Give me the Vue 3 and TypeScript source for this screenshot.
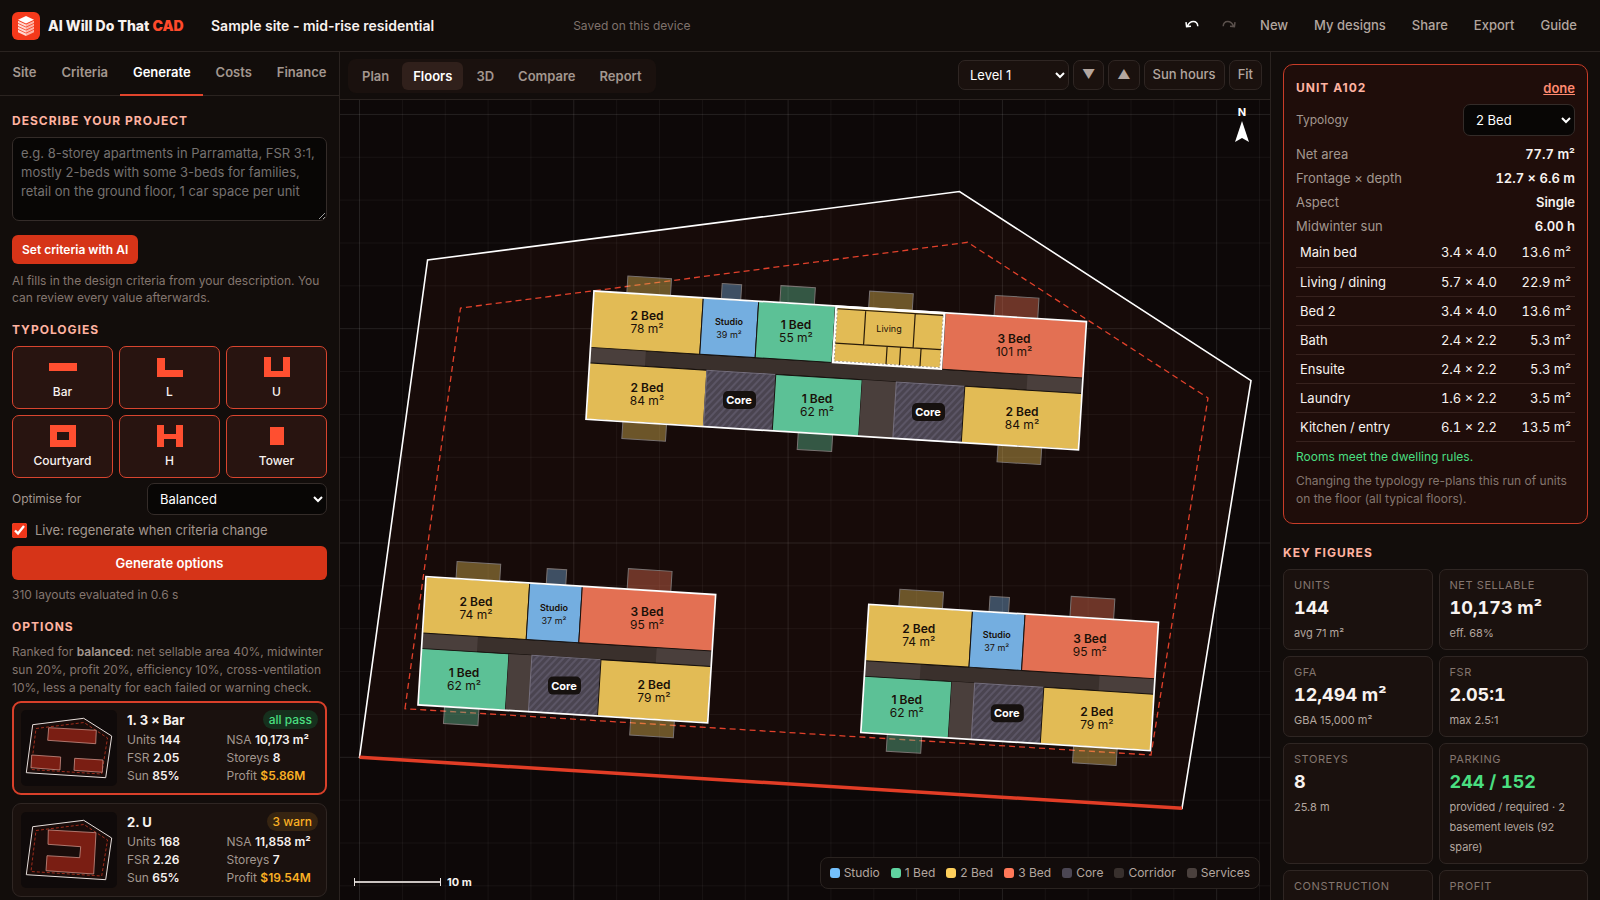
<script setup lang="ts">
import { ref } from 'vue'

type Kind = 'studio' | 'bed1' | 'bed2' | 'bed3' | 'core' | 'corridor' | 'services'

interface Space { kind: Kind; x: number; y: number; w: number; h: number }
interface Label { x: number; y: number; name: string; area: string; small?: boolean }
interface Block { x: number; y: number; width: number; spaces: Space[]; balconies: Space[]; labels: Label[]; cores: { x: number; y: number }[] }
interface Figure { label: string; value?: string; note?: string; good?: boolean }

const tabs = ['Site', 'Criteria', 'Generate', 'Costs', 'Finance']
const activeTab = ref('Generate')
const views = ['Plan', 'Floors', '3D', 'Compare', 'Report']
const activeView = ref('Floors')
const menu = ['New', 'My designs', 'Share', 'Export', 'Guide']
const live = ref(true)
const brief = ref('')

const typologies = [
  { name: 'Bar', d: 'M3 8h28v8H3z' },
  { name: 'L', d: 'M4 3h8v12h18v7H4z' },
  { name: 'U', d: 'M4 2h7v14h12V2h7v20H4z' },
  { name: 'Courtyard', d: 'M4 1h26v22H4zM11 8v8h12V8z' },
  { name: 'H', d: 'M4 1h7v9h12V1h7v22h-7v-8H11v8H4z' },
  { name: 'Tower', d: 'M10 3h14v18H10z' },
]

const options = [
  {
    title: '1. 3 × Bar', badge: 'all pass', tone: 'pass', selected: true,
    stats: [['Units', '144'], ['NSA', '10,173 m²'], ['FSR', '2.05'], ['Storeys', '8'], ['Sun', '85%'], ['Profit', '$5.86M']],
    shapes: ['27.7,17.7 75.3,20.3 74.7,33.7 26.7,30.3', '10.7,45 39.7,47 39,60 10,57.7', '53.7,48.3 82,50 81.3,62.3 53,60.3'],
  },
  {
    title: '2. U', badge: '3 warn', tone: 'warn', selected: false,
    stats: [['Units', '168'], ['NSA', '11,858 m²'], ['FSR', '2.26'], ['Storeys', '7'], ['Sun', '65%'], ['Profit', '$19.54M']],
    shapes: ['27.3,18 75,20.7 72.7,62 25,58.7 26,43.7 58.7,45.7 59.7,34.7 27,32.3'],
  },
]

const facts = [
  ['Net area', '77.7 m²'],
  ['Frontage × depth', '12.7 × 6.6 m'],
  ['Aspect', 'Single'],
  ['Midwinter sun', '6.00 h'],
]
const rooms = [
  ['Main bed', '3.4 × 4.0', '13.6 m²'],
  ['Living / dining', '5.7 × 4.0', '22.9 m²'],
  ['Bed 2', '3.4 × 4.0', '13.6 m²'],
  ['Bath', '2.4 × 2.2', '5.3 m²'],
  ['Ensuite', '2.4 × 2.2', '5.3 m²'],
  ['Laundry', '1.6 × 2.2', '3.5 m²'],
  ['Kitchen / entry', '6.1 × 2.2', '13.5 m²'],
]
const figures: Figure[] = [
  { label: 'Units', value: '144', note: 'avg 71 m²' },
  { label: 'Net sellable', value: '10,173 m²', note: 'eff. 68%' },
  { label: 'GFA', value: '12,494 m²', note: 'GBA 15,000 m²' },
  { label: 'FSR', value: '2.05:1', note: 'max 2.5:1' },
  { label: 'Storeys', value: '8', note: '25.8 m' },
  { label: 'Parking', value: '244 / 152', note: 'provided / required · 2 basement levels (92 spare)', good: true },
  { label: 'Construction' },
  { label: 'Profit' },
]
const legend: { kind: Kind; name: string }[] = [
  { kind: 'studio', name: 'Studio' },
  { kind: 'bed1', name: '1 Bed' },
  { kind: 'bed2', name: '2 Bed' },
  { kind: 'bed3', name: '3 Bed' },
  { kind: 'core', name: 'Core' },
  { kind: 'corridor', name: 'Corridor' },
  { kind: 'services', name: 'Services' },
]

const NORTH = 56.5
const SOUTH = 72
const DEPTH = 128.5

function row(y: number, cuts: number[], kinds: Kind[]): Space[] {
  return kinds.map((kind, i) => ({ kind, x: cuts[i], y, w: cuts[i + 1] - cuts[i], h: 56.5 }))
}
function corridor(width: number): Space[] {
  return [
    { kind: 'corridor', x: 0, y: NORTH, w: width, h: SOUTH - NORTH },
    { kind: 'services', x: 0, y: NORTH, w: 55.5, h: SOUTH - NORTH },
    { kind: 'services', x: width - 55.5, y: NORTH, w: 55.5, h: SOUTH - NORTH },
  ]
}
function balconies(spaces: Space[]): Space[] {
  const sizes: Partial<Record<Kind, [number, number]>> = { studio: [19.5, 15.5], bed1: [34.5, 17], bed2: [43.7, 17], bed3: [43.7, 20.5] }
  return spaces.flatMap((s) => {
    const size = sizes[s.kind]
    if (!size) return []
    return [{ kind: s.kind, x: s.x + (s.w - size[0]) / 2, y: s.y === 0 ? -size[1] : DEPTH, w: size[0], h: size[1] }]
  })
}

const mainUnits = [
  ...row(0, [0, 109.5, 165, 242, 352, 493.4], ['bed2', 'studio', 'bed1', 'bed2', 'bed3']),
  ...row(SOUTH, [0, 117.6, 186.6, 273.2, 307.4, 376, 493.4], ['bed2', 'core', 'bed1', 'services', 'core', 'bed2']),
]
const wingUnits = [
  ...row(0, [0, 103.9, 156.6, 290.2], ['bed2', 'studio', 'bed3']),
  ...row(SOUTH, [0, 87.6, 110.6, 179.8, 290.2], ['bed1', 'services', 'core', 'bed2']),
]
function wing(x: number, y: number): Block {
  return {
    x, y, width: 290.2,
    spaces: [...corridor(290.2), ...wingUnits],
    balconies: balconies(wingUnits),
    labels: [
      { x: x + 50, y: y + 31, name: '2 Bed', area: '74 m²' },
      { x: x + 128, y: y + 36, name: 'Studio', area: '37 m²', small: true },
      { x: x + 221, y: y + 41, name: '3 Bed', area: '95 m²' },
      { x: x + 38, y: y + 102, name: '1 Bed', area: '62 m²' },
      { x: x + 228, y: y + 114, name: '2 Bed', area: '79 m²' },
    ],
    cores: [{ x: x + 138, y: y + 109 }],
  }
}
const blocks: Block[] = [
  {
    x: 594, y: 291, width: 493.4,
    spaces: [...corridor(493.4), ...mainUnits],
    balconies: balconies(mainUnits),
    labels: [
      { x: 647, y: 322, name: '2 Bed', area: '78 m²' },
      { x: 729, y: 327, name: 'Studio', area: '39 m²', small: true },
      { x: 796, y: 331, name: '1 Bed', area: '55 m²' },
      { x: 1014, y: 345, name: '3 Bed', area: '101 m²' },
      { x: 647, y: 394, name: '2 Bed', area: '84 m²' },
      { x: 817, y: 405, name: '1 Bed', area: '62 m²' },
      { x: 1022, y: 418, name: '2 Bed', area: '84 m²' },
    ],
    cores: [{ x: 739, y: 400 }, { x: 928, y: 412 }],
  },
  wing(426, 576.6),
  wing(868.8, 604.3),
]

const step = 42.86
const gridX = Array.from({ length: 61 }, (_, i) => ({ at: 359.5 + (i - 20) * step, major: i % 5 === 0 }))
const gridY = Array.from({ length: 41 }, (_, i) => ({ at: 757.3 + (i - 25) * step, major: i % 5 === 0 }))
</script>

<template>
  <div class="app">
    <header class="top">
      <svg class="logo" viewBox="0 0 28 28" aria-hidden="true">
        <rect width="28" height="28" rx="6" fill="#f4391b" />
        <path d="M14 4l8 3.800-8 3.800-8-3.800z" fill="#fff" />
        <path d="M6 8.700l8 3.800v2.200l-8-3.800zM6 11.700l8 3.800v2.200l-8-3.800zM6 14.700l8 3.800v2.200l-8-3.800zM6 17.700l8 3.800v2.500l-8-3.800z" fill="#ffd9d2" />
        <path d="M22 8.700l-8 3.800v2.200l8-3.800zM22 11.700l-8 3.800v2.200l8-3.800zM22 14.700l-8 3.800v2.200l8-3.800zM22 17.700l-8 3.800v2.500l8-3.800z" fill="#ffb5a8" />
      </svg>
      <span class="brand">AI Will Do That <b>CAD</b></span>
      <span class="project">Sample site - mid-rise residential</span>
      <span class="saved">Saved on this device</span>
      <nav class="menu" aria-label="Main">
        <button type="button" class="history" aria-label="Undo">
          <svg width="14" height="8" viewBox="0 0 14 8" aria-hidden="true"><path d="M2.500 6C4 2.600 6 1.400 8.300 1.400C11 1.400 12.600 3 12.800 6.200M1 2.200L1.600 6.600L6 6.200" fill="none" stroke="currentColor" stroke-width="1.500" /></svg>
        </button>
        <button type="button" class="history" aria-label="Redo" disabled>
          <svg width="14" height="8" viewBox="0 0 14 8" aria-hidden="true"><path d="M11.500 6C10 2.600 8 1.400 5.700 1.400C3 1.400 1.400 3 1.200 6.200M13 2.200L12.400 6.600L8 6.200" fill="none" stroke="currentColor" stroke-width="1.500" /></svg>
        </button>
        <button v-for="item in menu" :key="item" type="button">{{ item }}</button>
      </nav>
    </header>

    <aside class="left">
      <nav class="tabs" aria-label="Steps">
        <button v-for="tab in tabs" :key="tab" type="button" :class="{ on: tab === activeTab }" @click="activeTab = tab">{{ tab }}</button>
      </nav>
      <div class="left-body">
        <h2><label for="brief">Describe your project</label></h2>
        <textarea id="brief" v-model="brief" placeholder="e.g. 8-storey apartments in Parramatta, FSR 3:1, mostly 2-beds with some 3-beds for families, retail on the ground floor, 1 car space per unit"></textarea>
        <button type="button" class="primary small">Set criteria with AI</button>
        <p class="hint">AI fills in the design criteria from your description. You can review every value afterwards.</p>

        <h2>Typologies</h2>
        <div class="types">
          <button v-for="t in typologies" :key="t.name" type="button" class="type">
            <svg width="34" height="24" viewBox="0 0 34 24" aria-hidden="true"><path :d="t.d" fill="#ff4f30" fill-rule="evenodd" /></svg>
            <span>{{ t.name }}</span>
          </button>
        </div>
        <div class="optimise">
          <label for="optimise">Optimise for</label>
          <select id="optimise"><option>Balanced</option></select>
        </div>
        <label class="live"><input v-model="live" type="checkbox" />Live: regenerate when criteria change</label>
        <button type="button" class="primary wide">Generate options</button>
        <p class="count">310 layouts evaluated in 0.6 s</p>

        <h2>Options</h2>
        <p class="ranked">Ranked for <b>balanced</b>: net sellable area 40%, midwinter sun 20%, profit 20%, efficiency 10%, cross-ventilation 10%, less a penalty for each failed or warning check.</p>
        <article v-for="o in options" :key="o.title" class="option" :class="{ selected: o.selected }">
          <svg class="thumb" width="96" height="76" viewBox="0 0 96 76" aria-hidden="true">
            <rect width="96" height="76" rx="5" fill="#0f0a0a" />
            <polygon points="11.7,14.7 62.7,8.3 90.7,26 84.7,67.7 5.3,62.7" fill="#190c0a" stroke="#e6dedb" />
            <polygon points="15,18.5 63,12.500 86.500,28 80.700,64 10,59.500" fill="none" stroke="#c2341f" stroke-width=".8" stroke-dasharray="3 2" />
            <polygon v-for="s in o.shapes" :key="s" :points="s" fill="#7a1e13" stroke="#c98f85" stroke-width=".8" />
          </svg>
          <div class="option-main">
            <div class="option-head"><h3>{{ o.title }}</h3><span class="badge" :class="o.tone">{{ o.badge }}</span></div>
            <dl>
              <div v-for="[k, v] in o.stats" :key="k"><dt>{{ k }}</dt>{{ ' ' }}<dd :class="{ money: k === 'Profit' }">{{ v }}</dd></div>
            </dl>
          </div>
        </article>
      </div>
    </aside>

    <main class="center">
      <div class="toolbar">
        <div class="views">
          <button v-for="v in views" :key="v" type="button" :class="{ on: v === activeView }" @click="activeView = v">{{ v }}</button>
        </div>
        <div class="tools">
          <select aria-label="Level"><option>Level 1</option></select>
          <button type="button" aria-label="Level down">▼</button>
          <button type="button" aria-label="Level up">▲</button>
          <button type="button">Sun hours</button>
          <button type="button">Fit</button>
        </div>
      </div>
      <div class="canvas">
        <svg class="plan" viewBox="340 100 930 800" preserveAspectRatio="xMidYMid meet" role="img" aria-label="Level 1 floor plan">
          <defs>
            <pattern id="hatch" width="5" height="5" patternUnits="userSpaceOnUse" patternTransform="rotate(40)">
              <rect width="5" height="5" fill="#4a4450" />
              <rect width="2" height="5" fill="#5b5565" />
            </pattern>
          </defs>
          <g stroke="#fff">
            <line v-for="g in gridX" :key="'x' + g.at" :x1="g.at" :x2="g.at" y1="-300" y2="1200" :stroke-opacity="g.major ? 0.1 : 0.05" />
            <line v-for="g in gridY" :key="'y' + g.at" :y1="g.at" :y2="g.at" x1="-500" x2="2200" :stroke-opacity="g.major ? 0.1 : 0.05" />
          </g>
          <polygon points="359.5,757.3 427.6,260 959.5,191.5 1251,380.6 1182,808.3" fill="#ff5a30" fill-opacity=".045" stroke="#fff" stroke-width="1.600" />
          <line x1="359.5" y1="757.3" x2="1182" y2="808.3" stroke="#e23d26" stroke-width="3.500" />
          <polygon points="405,708.7 460.5,308 967.7,242.3 1208,398 1151,755" fill="none" stroke="#e2412b" stroke-width="1.300" stroke-dasharray="6 4" />

          <g v-for="b in blocks" :key="b.x" :transform="`translate(${b.x} ${b.y}) rotate(3.560)`">
            <rect v-for="(s, i) in b.balconies" :key="'b' + i" :x="s.x" :y="s.y" :width="s.w" :height="s.h" class="balcony" :class="s.kind" />
            <rect v-for="(s, i) in b.spaces" :key="'s' + i" :x="s.x" :y="s.y" :width="s.w" :height="s.h" class="space" :class="s.kind" />
            <rect :width="b.width" height="128.5" fill="none" stroke="#fff" stroke-width="1.700" />
          </g>

          <g transform="translate(594 291) rotate(3.560) translate(242 0)">
            <rect x="1" y=".5" width="108" height="55.5" fill="#e2bb55" stroke="#fff" stroke-width="2.600" />
            <path d="M2 2.600H108M2 37H108M30.400 3V37M80 3V37M54 37V55M67.500 37V55M88 37V55" fill="none" stroke="#2a1c0a" stroke-width="1.200" />
            <path d="M2 3V55H108V3" fill="none" stroke="#2a1c0a" stroke-opacity=".6" stroke-width=".6" stroke-dasharray="2 2" />
          </g>

          <g text-anchor="middle">
            <template v-for="b in blocks" :key="'t' + b.x">
              <g v-for="l in b.labels" :key="l.name + l.x + l.y" :class="l.small ? 'label-small' : 'label'">
                <text :x="l.x" :y="l.y - 2" class="name">{{ l.name }}</text>
                <text :x="l.x" :y="l.y + 11">{{ l.area }}</text>
              </g>
              <g v-for="c in b.cores" :key="'c' + c.x" class="core-tag">
                <rect :x="c.x - 16" :y="c.y - 9" width="33" height="18" rx="5" />
                <text :x="c.x" :y="c.y + 4">Core</text>
              </g>
            </template>
            <text x="889" y="332" class="room">Living</text>
          </g>
        </svg>
        <svg class="north" width="20" height="39" viewBox="0 0 20 39" role="img" aria-label="North">
          <text x="10" y="12" text-anchor="middle">N</text>
          <path d="M10 17l7 21-7-4-7 4z" fill="#fff" />
        </svg>
        <div class="scale"><span class="rule"></span>10 m</div>
        <ul class="legend">
          <li v-for="l in legend" :key="l.kind"><i :class="l.kind"></i>{{ l.name }}</li>
        </ul>
      </div>
    </main>

    <aside class="right">
      <section class="unit">
        <div class="unit-head"><h2>Unit A102</h2><a href="#">done</a></div>
        <div class="field"><label for="typology">Typology</label><select id="typology"><option>2 Bed</option></select></div>
        <dl class="facts">
          <div v-for="[k, v] in facts" :key="k"><dt>{{ k }}</dt><dd>{{ v }}</dd></div>
        </dl>
        <table>
          <tbody>
            <tr v-for="r in rooms" :key="r[0]"><td>{{ r[0] }}</td><td>{{ r[1] }}</td><td>{{ r[2] }}</td></tr>
          </tbody>
        </table>
        <p class="ok">Rooms meet the dwelling rules.</p>
        <p class="note">Changing the typology re-plans this run of units on the floor (all typical floors).</p>
      </section>
      <h2>Key figures</h2>
      <div class="figures">
        <div v-for="f in figures" :key="f.label" class="figure">
          <span class="figure-label">{{ f.label }}</span>
          <strong v-if="f.value" :class="{ good: f.good }">{{ f.value }}</strong>
          <span v-if="f.note" class="figure-note">{{ f.note }}</span>
        </div>
      </div>
    </aside>
  </div>
</template>

<style>
html, body { background: #120d0b; }
</style>

<style scoped>
.app {
  display: grid;
  grid-template: 52px minmax(0, 1fr) / 340px minmax(0, 1fr) 330px;
  height: 100vh;
  overflow: hidden;
  background: #120d0b;
  color: #f8f2ef;
  color-scheme: dark;
  font: 13px/18px Inter, "Liberation Sans", sans-serif;
}
* { box-sizing: border-box; }
button, select, textarea { font: inherit; color: inherit; }
button { cursor: pointer; }
h2, h3, p, dl, dd, ul { margin: 0; padding: 0; }
h2 { color: #ffb3a1; font-size: 12px; line-height: 18px; font-weight: 700; letter-spacing: 1px; text-transform: uppercase; }

.top { grid-column: 1 / -1; display: flex; align-items: center; padding: 0 11px 0 12px; border-bottom: 1px solid #2a2320; }
.logo { width: 28px; height: 28px; flex: none; }
.brand { min-width: 141px; margin-left: 8px; font-size: 14px; font-weight: 800; white-space: nowrap; }
.brand b { color: #ff4a2b; font-weight: 900; }
.project { margin-left: 22px; font-size: 14px; font-weight: 600; white-space: nowrap; }
.saved { margin-left: 139px; font-size: 12px; color: #7f726c; white-space: nowrap; }
.menu { display: flex; gap: 2px; margin-left: auto; }
.menu button { height: 30px; padding: 0 12px 1px; border: 0; background: none; color: #b3a69f; font-weight: 500; white-space: nowrap; }
.menu .history { display: flex; align-items: center; justify-content: center; width: 35px; padding: 0 0 4px; color: #fff; }
.menu .history:disabled { color: #5a504c; }

.left { border-right: 1px solid #2a2320; overflow: hidden; min-height: 0; }
.tabs { display: flex; height: 44px; border-bottom: 1px solid #2a2320; }
.tabs button { flex: 1 1 auto; padding: 0 8px 3px; border: 0; border-bottom: 2px solid transparent; background: none; color: #a3978f; font-weight: 600; margin-bottom: -1px; }
.tabs .on { color: #fff; border-color: #e0442c; }
.left-body { display: flex; flex-direction: column; padding: 16px 12px; }
textarea { display: block; width: 100%; height: 84px; margin: 7px 0 14px; padding: 6px 8px; border: 1px solid #342c29; border-radius: 7px; background: #080605; line-height: 19px; resize: vertical; }
textarea::placeholder { color: #757170; }
.primary { border: 0; border-radius: 6px; background: #d63418; color: #fff; font-weight: 600; }
.small { align-self: flex-start; height: 29px; padding: 0 10px; font-size: 12px; }
.wide { height: 34px; margin-top: 7px; }
.hint { margin: 8px 0 15px; color: #84766f; font-size: 12px; line-height: 17px; }
.types { display: grid; grid-template-columns: repeat(3, minmax(0, 1fr)); gap: 6px; margin: 7px 0 5px; }
.type { display: flex; flex-direction: column; align-items: center; gap: 4px; padding: 8px 4px; border: 1px solid #d8452f; border-radius: 7px; background: #281410; font-size: 12px; font-weight: 500; line-height: 17px; }
.optimise, .field { display: flex; align-items: center; justify-content: space-between; color: #a3978f; }
.optimise label, .field label { font-size: 12px; }
select { height: 32px; padding: 0 8px; border: 1px solid #342c29; border-radius: 7px; background: #080605; color: #fff; }
.optimise select { width: 180px; }
.live { display: flex; align-items: center; gap: 8px; margin-top: 6px; color: #a3978f; }
.live input { width: 15px; height: 15px; margin: 0; accent-color: #f0371a; }
.count { margin: 6px 0 15px; color: #84766f; font-size: 12px; line-height: 17px; }
.ranked { margin: 7px 0 4px; color: #84766f; font-size: 12px; line-height: 18px; }
.ranked b { font-weight: 600; color: #a3978f; }
.option { display: flex; gap: 10px; margin-bottom: 8px; padding: 8px; border: 1px solid #2f2623; border-radius: 9px; background: #1a110e; }
.option.selected { padding: 7px; border: 2px solid #d9402a; }
.thumb { flex: none; }
.option-main { flex: 1; min-width: 0; }
.option-head { display: flex; justify-content: space-between; align-items: center; height: 19px; }
.option h3 { font-size: 13px; font-weight: 700; }
.badge { padding: 0 6px; border-radius: 10px; font-size: 12px; font-weight: 500; line-height: 19px; }
.pass { background: #16301d; color: #4ade80; }
.warn { background: #362411; color: #fbb024; }
.option dl { display: grid; grid-template-columns: 1fr 1fr; column-gap: 8px; font-size: 12px; line-height: 18px; padding-top: 2px; }
.option dl > div { white-space: nowrap; }
dt, dd { display: inline; }
.option dt { color: #a3978f; }
.option dd { font-weight: 600; }
.option .money { color: #fbb024; }

.center { display: flex; flex-direction: column; min-width: 0; min-height: 0; }
.toolbar { display: flex; justify-content: space-between; align-items: center; height: 48px; padding: 0 8px; border-bottom: 1px solid #2a2320; }
.views { display: flex; gap: 2px; padding: 3px; border-radius: 8px; background: #1a110e; }
.views button { height: 28px; padding: 0 11px; border: 0; border-radius: 6px; background: none; color: #a3978f; font-weight: 600; }
.views .on { background: #30201b; color: #fff; }
.tools { display: flex; gap: 4px; margin-bottom: 2px; }
.tools button, .tools select { height: 30px; border: 1px solid #2f2623; border-radius: 7px; background: #1a110e; }
.tools button { padding: 0 8px 1px; color: #b3a69f; font-weight: 500; }
.tools select { width: 111px; padding: 0 7px; }
.canvas { position: relative; flex: 1; min-height: 0; background: #0d0808; overflow: hidden; }
.plan { position: absolute; inset: 0; width: 100%; height: 100%; overflow: visible; }
.space { stroke: #17110e; stroke-width: 1; }
.balcony { stroke: #fff; stroke-width: 1; opacity: 0.42; }
.studio { fill: #74aee0; background: #74c0fc; }
.bed1 { fill: #5cc196; background: #5fd3a0; }
.bed2 { fill: #e2bb55; background: #ffd05c; }
.bed3 { fill: #e37053; background: #ff7859; }
.core { fill: url(#hatch); stroke: #77717f; background: #4b4653; }
.corridor { fill: #3a302c; background: #38302d; }
.services { fill: #4a3f3c; background: #4a403d; }
.space.services { stroke: none; }
.label, .label-small { fill: #1a1008; font-size: 12px; }
.label-small { font-size: 9px; }
.name { font-weight: 600; }
.room { fill: #1a1008; font-size: 9px; }
.core-tag rect { fill: #16110f; }
.core-tag text { fill: #fff; font-size: 11px; font-weight: 700; }
.north { position: absolute; top: 4px; right: 18px; }
.north text { fill: #fff; font-size: 11px; font-weight: 700; }
.scale { position: absolute; left: 14px; bottom: 9px; display: flex; align-items: center; gap: 6px; font-size: 11px; font-weight: 700; line-height: 18px; }
.rule { display: flex; align-items: center; width: 87px; height: 8px; border: solid #e8e2df; border-width: 0 1px; }
.rule::before { content: ""; flex: 1; height: 2px; background: #c9c3c0; }
.legend { position: absolute; right: 10px; bottom: 11px; display: flex; gap: 11px; padding: 6px 9px; border: 1px solid #2a2320; border-radius: 8px; background: #120c0b; list-style: none; color: #b3a69f; font-size: 12px; }
.legend li { display: flex; align-items: center; gap: 4px; white-space: nowrap; }
.legend i { width: 10px; height: 10px; border-radius: 3px; }

.right { padding: 12px; border-left: 1px solid #2a2320; overflow: hidden; min-height: 0; }
.unit { padding: 14px 12px 15px; margin-bottom: 20px; border: 1px solid #c83c28; border-radius: 10px; background: #1f0d0a; }
.unit-head { display: flex; justify-content: space-between; align-items: center; margin-bottom: 7px; }
.unit-head a { color: #ff8a70; font-weight: 600; }
.field select { width: 112px; }
.facts { margin: 6px 0 0; line-height: 24px; }
.facts > div { display: flex; justify-content: space-between; }
.facts dt { color: #a3978f; }
.facts dd { font-weight: 600; font-variant-numeric: tabular-nums; }
table { width: 100%; border-collapse: collapse; font-variant-numeric: tabular-nums; }
td { height: 29px; padding: 0 4px; border-bottom: 1px solid #37221e; text-align: right; }
td:first-child { text-align: left; }
td:last-child { width: 74px; }
.ok { margin-top: 6px; color: #4ade80; font-size: 12px; }
.note { margin-top: 6px; color: #84766f; font-size: 12px; }
.figures { display: grid; grid-template-columns: repeat(2, minmax(0, 1fr)); gap: 6px; margin-top: 7px; }
.figure { display: flex; flex-direction: column; min-height: 81px; padding: 6px 10px; border: 1px solid #2f2623; border-radius: 7px; background: #1a110e; }
.figure-label { color: #84766f; font-size: 11px; line-height: 19px; letter-spacing: 0.05em; text-transform: uppercase; }
.figure strong { font-size: 18px; line-height: 26px; font-weight: 700; font-variant-numeric: tabular-nums; }
.figure .good { color: #4ade80; }
.figure-note { padding-top: 2px; color: #b3a69f; font-size: 11px; line-height: 20px; }
</style>
